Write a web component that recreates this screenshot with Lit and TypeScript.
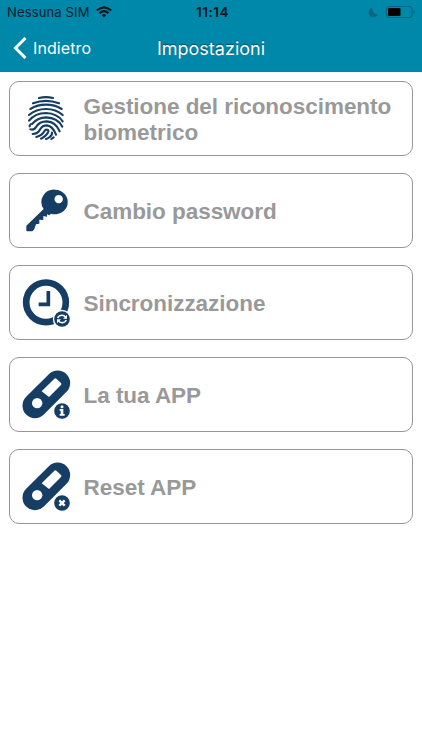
import { LitElement, html, css, svg } from "lit";
import { customElement } from "lit/decorators.js";

const fingerprint = svg`
  <g fill="none" stroke="#163d64" stroke-width="6.4" stroke-linecap="round">
    <path d="M87 42Q108 37 129 42"/>
    <path d="M69 58Q108 43 147 58"/>
    <path d="M61 75Q82 62 108 62T155 75"/>
    <path d="M57 93Q78 75 108 75T158 93"/>
    <path d="M57 110Q76 87 108 87Q142 88 158 112"/>
    <path d="M66 120Q84 100 108 100Q143 101 157 128"/>
    <path d="M61 136Q72 140 78 129Q88 112 110 112Q137 113 149 142"/>
    <path d="M68 150Q84 150 91 135Q97 124 111 124Q128 126 138 152"/>
    <path d="M79 159Q96 155 103 142Q107 135 114 138Q118 142 109 152Q102 160 93 164"/>
    <path d="M126 146Q127 154 119 159Q113 164 108 165"/>
    <path d="M131 160L124 165"/>
    <path d="M62 121Q58 125 59 127"/>
  </g>`;

const key = svg`
  <path fill="#163d64" fill-rule="evenodd" d="M136 41a38 37 0 1 1-13 72l-5 5-7-3v7l-11-2v12l-12-1v12l-10 2-2 6-4 10-5 5H51l-2-2v-15l52-50A38 37 0 0 1 136 41ZM146 57a12.500 12.500 0 1 0 .1 0Z"/>`;

const clock = svg`
  <circle cx="108" cy="103" r="59.500" fill="none" stroke="#163d64" stroke-width="20"/>
  <path d="M115 69V109H86" fill="none" stroke="#163d64" stroke-width="11"/>
  <circle cx="156" cy="153" r="27.500" fill="#fff"/>
  <circle cx="156" cy="153" r="23.500" fill="#163d64"/>
  <g fill="none" stroke="#fff" stroke-width="4.500">
    <path d="M143 150Q147 142 156 142Q163 142 167 148"/>
    <path d="M169 156Q165 164 156 164Q149 164 145 158"/>
  </g>
  <path d="M171 140V152H159ZM141 166V154H153Z" fill="#fff"/>`;

const device = svg`
  <path d="M75 137L143 69" stroke="#163d64" stroke-width="75" stroke-linecap="round"/>
  <circle cx="81.500" cy="129.500" r="15.500" fill="#fff"/>
  <path d="M95 94L133 56Q136 53 139 56L153 69Q156 72 153 75L117 111Z" fill="#fff"/>
  <circle cx="156" cy="153" r="27.500" fill="#fff"/>
  <circle cx="156" cy="153" r="23.500" fill="#163d64"/>`;

const info = svg`${device}
  <circle cx="156" cy="140" r="4.500" fill="#fff"/>
  <path d="M149 147H160V162H164V167H149V162H152V152H149Z" fill="#fff"/>`;

const reset = svg`${device}
  <path d="M148 145L164 161M164 145L148 161" stroke="#fff" stroke-width="7"/>`;

const items = [
  { label: "Gestione del riconoscimento biometrico", icon: fingerprint },
  { label: "Cambio password", icon: key },
  { label: "Sincronizzazione", icon: clock },
  { label: "La tua APP", icon: info },
  { label: "Reset APP", icon: reset },
];

@customElement("app-root")
export class AppRoot extends LitElement {
  static styles = css`
    :host {
      display: block;
      height: 750px;
      background: #fff;
      font-family: "Liberation Sans", Arial, sans-serif;
    }
    header {
      height: 72px;
      background: #0088aa;
    }
    .status {
      height: 24px;
      display: grid;
      grid-template-columns: 1fr auto 1fr;
      align-items: center;
      padding: 0 6px 0 7px;
      color: #06202a;
      font-family: Inter, sans-serif;
      font-size: 13px;
    }
    .carrier {
      display: flex;
      align-items: center;
      gap: 6.5px;
      letter-spacing: 0.15px;
    }
    .time {
      padding-left: 2px;
      font-weight: 600;
      color: #04141b;
      font-size: 13.5px;
      letter-spacing: 0.5px;
    }
    .power {
      display: flex;
      justify-content: flex-end;
    }
    svg {
      display: block;
      flex: none;
    }
    .nav {
      height: 48px;
      display: grid;
      grid-template-columns: 1fr auto 1fr;
      align-items: center;
      color: #fff;
      font-family: Inter, sans-serif;
    }
    .back {
      display: flex;
      align-items: center;
      gap: 6px;
      padding-left: 13px;
      font-size: 16px;
      letter-spacing: 0.1px;
    }
    .title {
      font-size: 18px;
      text-shadow: 0 -1px 1px rgba(0, 0, 0, 0.45);
    }
    .list {
      display: flex;
      flex-direction: column;
      gap: 17px;
      padding: 9px 9px 0;
    }
    .card {
      box-sizing: border-box;
      height: 75px;
      display: flex;
      align-items: center;
      border: 1px solid #979797;
      border-radius: 10px;
    }
    .label {
      padding: 2px 0 0 0.5px;
      color: #999;
      font-size: 22.5px;
      font-weight: bold;
      line-height: 26px;
      letter-spacing: -0.04px;
    }
  `;

  render() {
    return html`
      <header>
        <div class="status">
          <div class="carrier">
            <span>Nessuna SIM</span>
            <svg width="16" height="12" viewBox="0 0 16 12" fill="none" stroke="#04141b" stroke-width="2.1">
              <path d="M.8 4.500Q8-1.900 15.200 4.500M3.500 7.200Q8 3.200 12.500 7.200" />
              <path d="M5.700 9Q8 7 10.300 9L8 11.400Z" fill="#04141b" stroke="none" />
            </svg>
          </div>
          <div class="time">11:14</div>
          <div class="power">
            <svg width="48" height="14" viewBox="0 0 48 14">
              <path d="M4.700 2.500A4.900 4.900 0 1 0 10 9.200A5 5 0 0 1 4.700 2.500Z" fill="#086683" />
              <rect x="18.500" y="1.500" width="25.500" height="11" rx="3" fill="none" stroke="#086683" stroke-width="1.200" />
              <rect x="20" y="3" width="12.500" height="8" rx="1" fill="#000" />
              <path d="M45.500 5Q48 7 45.500 9Z" fill="#086683" />
            </svg>
          </div>
        </div>
        <div class="nav">
          <div class="back">
            <svg width="14" height="22" viewBox="0 0 14 22" fill="none" stroke="#fff" stroke-width="3">
              <path d="M12.500 1L2.500 11L12.500 21" />
            </svg>
            <span>Indietro</span>
          </div>
          <div class="title">Impostazioni</div>
        </div>
      </header>
      <div class="list">
        ${items.map(
          (item) => html`
            <div class="card">
              <svg width="73" height="73" viewBox="0 -6 219 219">${item.icon}</svg>
              <div class="label">${item.label}</div>
            </div>
          `
        )}
      </div>
    `;
  }
}
